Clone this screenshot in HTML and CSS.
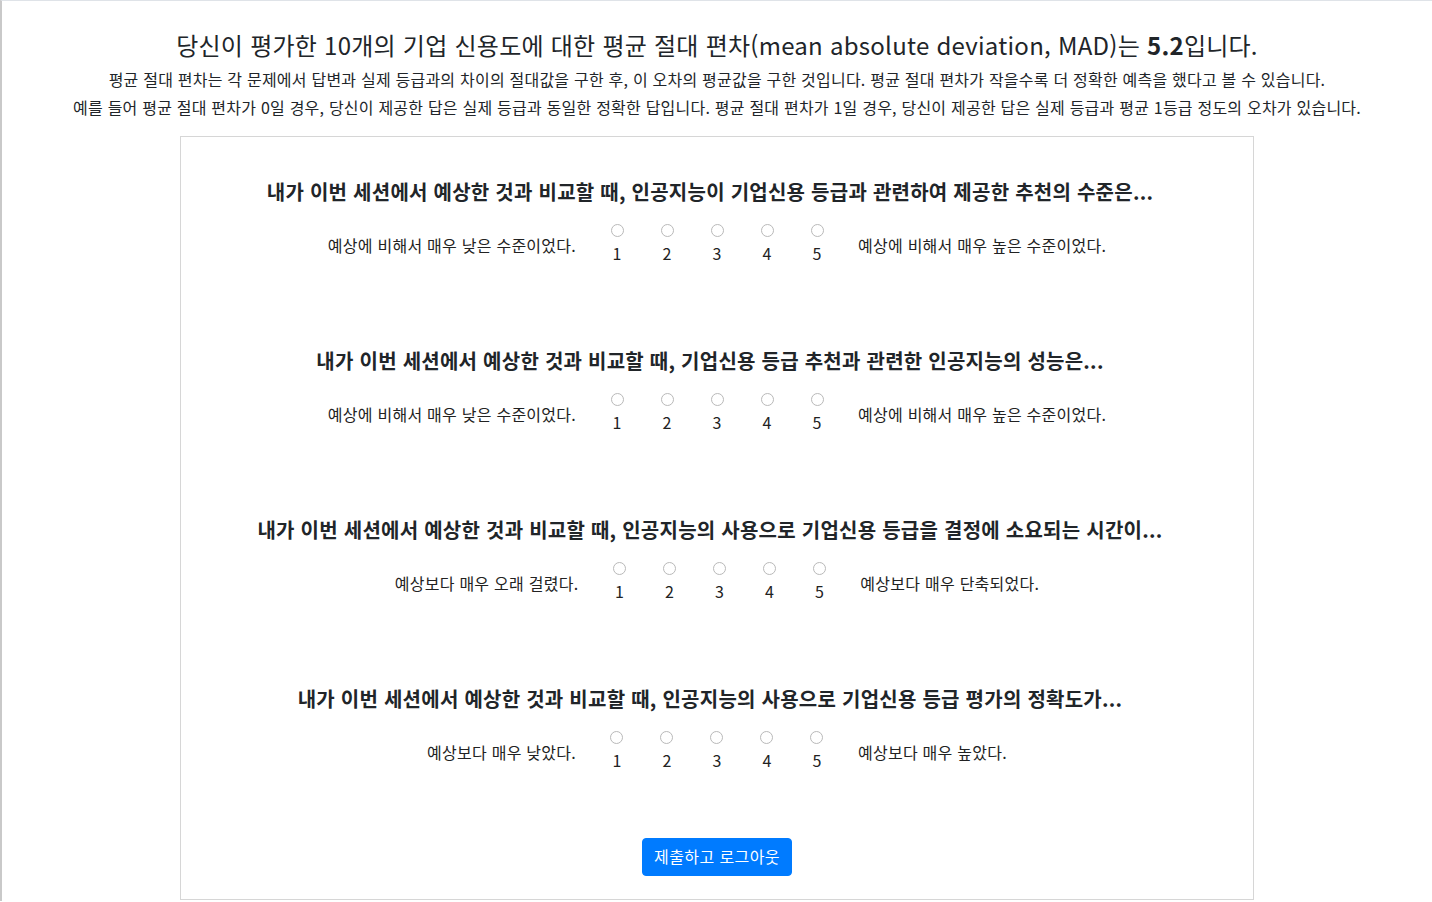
FILE: index.html
```html
<!DOCTYPE html>
<html lang="ko">
<head>
<meta charset="utf-8">
<title>설문</title>
<link rel="stylesheet" href="styles.css">
</head>
<body>
<div class="page">
  <header class="summary">
    <h1 class="summary-title">당신이 평가한 10개의 기업 신용도에 대한 평균 절대 편차(mean absolute deviation, MAD)는 <b>5.2</b>입니다.</h1>
    <p class="summary-text">평균 절대 편차는 각 문제에서 답변과 실제 등급과의 차이의 절대값을 구한 후, 이 오차의 평균값을 구한 것입니다. 평균 절대 편차가 작을수록 더 정확한 예측을 했다고 볼 수 있습니다.</p>
    <p class="summary-text">예를 들어 평균 절대 편차가 0일 경우, 당신이 제공한 답은 실제 등급과 동일한 정확한 답입니다. 평균 절대 편차가 1일 경우, 당신이 제공한 답은 실제 등급과 평균 1등급 정도의 오차가 있습니다.</p>
  </header>

  <form class="card">
    <section class="question">
      <h2 class="q-title">내가 이번 세션에서 예상한 것과 비교할 때, 인공지능이 기업신용 등급과 관련하여 제공한 추천의 수준은...</h2>
      <div class="scale">
        <span class="anchor anchor-left">예상에 비해서 매우 낮은 수준이었다.</span>
        <label class="opt"><input type="radio" name="q1"><span>1</span></label>
        <label class="opt"><input type="radio" name="q1"><span>2</span></label>
        <label class="opt"><input type="radio" name="q1"><span>3</span></label>
        <label class="opt"><input type="radio" name="q1"><span>4</span></label>
        <label class="opt"><input type="radio" name="q1"><span>5</span></label>
        <span class="anchor anchor-right">예상에 비해서 매우 높은 수준이었다.</span>
      </div>
    </section>

    <section class="question">
      <h2 class="q-title">내가 이번 세션에서 예상한 것과 비교할 때, 기업신용 등급 추천과 관련한 인공지능의 성능은...</h2>
      <div class="scale">
        <span class="anchor anchor-left">예상에 비해서 매우 낮은 수준이었다.</span>
        <label class="opt"><input type="radio" name="q2"><span>1</span></label>
        <label class="opt"><input type="radio" name="q2"><span>2</span></label>
        <label class="opt"><input type="radio" name="q2"><span>3</span></label>
        <label class="opt"><input type="radio" name="q2"><span>4</span></label>
        <label class="opt"><input type="radio" name="q2"><span>5</span></label>
        <span class="anchor anchor-right">예상에 비해서 매우 높은 수준이었다.</span>
      </div>
    </section>

    <section class="question">
      <h2 class="q-title">내가 이번 세션에서 예상한 것과 비교할 때, 인공지능의 사용으로 기업신용 등급을 결정에 소요되는 시간이...</h2>
      <div class="scale">
        <span class="anchor anchor-left">예상보다 매우 오래 걸렸다.</span>
        <label class="opt"><input type="radio" name="q3"><span>1</span></label>
        <label class="opt"><input type="radio" name="q3"><span>2</span></label>
        <label class="opt"><input type="radio" name="q3"><span>3</span></label>
        <label class="opt"><input type="radio" name="q3"><span>4</span></label>
        <label class="opt"><input type="radio" name="q3"><span>5</span></label>
        <span class="anchor anchor-right">예상보다 매우 단축되었다.</span>
      </div>
    </section>

    <section class="question">
      <h2 class="q-title">내가 이번 세션에서 예상한 것과 비교할 때, 인공지능의 사용으로 기업신용 등급 평가의 정확도가...</h2>
      <div class="scale">
        <span class="anchor anchor-left">예상보다 매우 낮았다.</span>
        <label class="opt"><input type="radio" name="q4"><span>1</span></label>
        <label class="opt"><input type="radio" name="q4"><span>2</span></label>
        <label class="opt"><input type="radio" name="q4"><span>3</span></label>
        <label class="opt"><input type="radio" name="q4"><span>4</span></label>
        <label class="opt"><input type="radio" name="q4"><span>5</span></label>
        <span class="anchor anchor-right">예상보다 매우 높았다.</span>
      </div>
    </section>

    <div class="actions">
      <button type="button" class="btn-submit">제출하고 로그아웃</button>
    </div>
  </form>
</div>
</body>
</html>
```

FILE: styles.css
```css
html, body {
  margin: 0;
  padding: 0;
  background: #ffffff;
}

body {
  font-family: "Noto Sans CJK KR", "Noto Sans", sans-serif;
  color: #212529;
  border-top: 1px solid #dfe3e8;
  border-left: 2px solid #c9c9c9;
  min-height: 901px;
  box-sizing: border-box;
}

.page {
  display: flex;
  flex-direction: column;
  align-items: center;
}

.summary {
  text-align: center;
  padding-top: 29px;
}

.summary-title {
  margin: 0 0 5px;
  font-size: 24px;
  font-weight: 400;
  line-height: 30px;
  letter-spacing: 0.25px;
}

.summary-title b {
  font-weight: 700;
}

.summary-text {
  margin: 0;
  font-size: 16px;
  line-height: 28px;
  letter-spacing: 0.22px;
}

.card {
  width: 75vw;
  margin: 15px auto 0;
  border: 1px solid #d6d6d6;
  box-sizing: border-box;
  padding: 40px 0 23px;
  display: flex;
  flex-direction: column;
  align-items: center;
}

.question {
  display: flex;
  flex-direction: column;
  align-items: center;
  margin-bottom: 81px;
}

.question:last-of-type {
  margin-bottom: 66px;
}

.q-title {
  margin: 0 0 17px;
  padding-right: 14px;
  font-size: 20px;
  font-weight: 700;
  line-height: 30px;
  letter-spacing: 0.25px;
}

.scale {
  display: flex;
  align-items: center;
}

.anchor {
  font-size: 16px;
  line-height: 24px;
  letter-spacing: 0.25px;
  color: #222;
}

.anchor-left {
  margin-right: 16px;
}

.anchor-right {
  margin-left: 16px;
}

.opt {
  width: 50px;
  display: flex;
  flex-direction: column;
  align-items: center;
  font-size: 16px;
  line-height: 24px;
  color: #222;
}

.opt input {
  appearance: none;
  -webkit-appearance: none;
  width: 13px;
  height: 13px;
  margin: 0 0 4px;
  border: 1px solid #b9b9b9;
  border-radius: 50%;
  background: #fff;
  box-sizing: border-box;
}

.actions {
  display: flex;
  justify-content: center;
}

.btn-submit {
  font-family: inherit;
  font-size: 16px;
  line-height: 24px;
  padding: 0 0 3px;
  width: 150px;
  height: 38px;
  box-sizing: border-box;
  white-space: nowrap;
  color: #fff;
  background: #007bff;
  border: 1px solid #007bff;
  border-radius: 4px;
  letter-spacing: 0.4px;
}
```
